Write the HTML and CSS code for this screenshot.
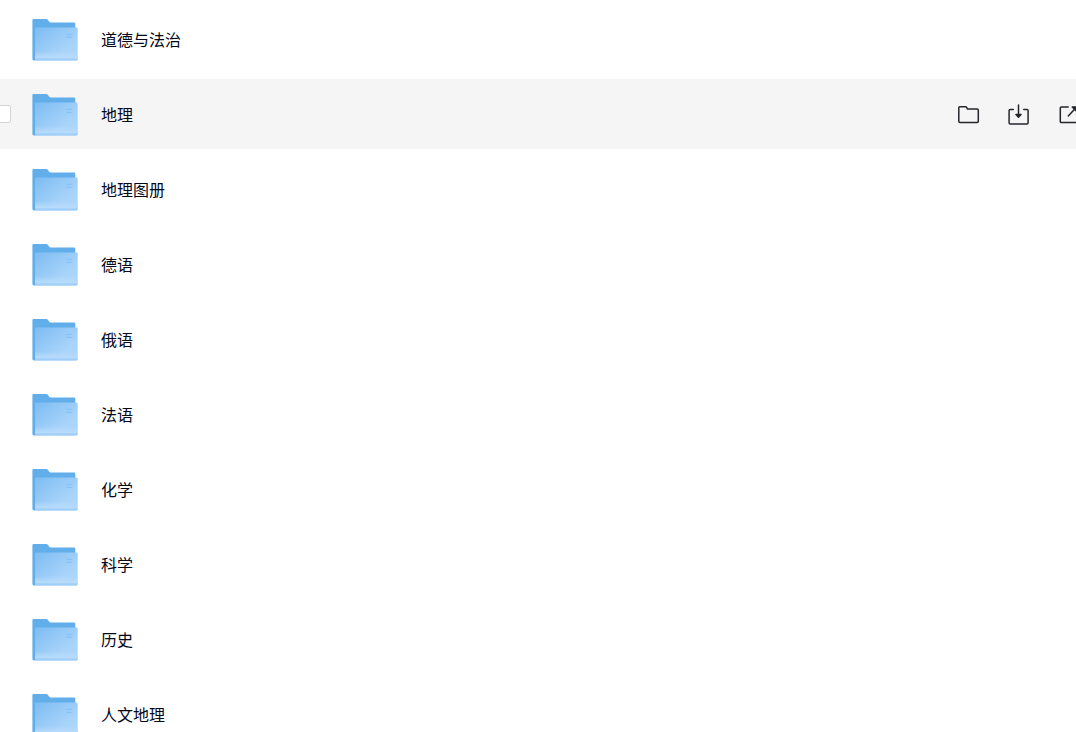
FILE: index.html
```html
<!DOCTYPE html>
<html lang="zh-CN">
<head>
    <meta charset="UTF-8">
    <meta name="viewport" content="width=device-width, initial-scale=1.0">
    <title>文件列表</title>
    <link rel="stylesheet" href="styles.css">
</head>
<body>
    <!-- Shared icons -->
    <svg class="sprite" aria-hidden="true">
        <defs>
            <linearGradient id="front" x1="0" y1="0" x2="1" y2="1">
                <stop offset="0" stop-color="#7dbcf2"/>
                <stop offset="0.7" stop-color="#a9d4fa"/>
                <stop offset="1" stop-color="#aed6fb"/>
            </linearGradient>
            <linearGradient id="shine" x1="0" y1="0" x2="0" y2="1">
                <stop offset="0" stop-color="#b9dcfc" stop-opacity="0"/>
                <stop offset="1" stop-color="#b9dcfc"/>
            </linearGradient>
        </defs>
        <symbol id="icon-folder" viewBox="0 0 46 44">
            <path fill="#62aeeb" d="M1.5 2H14.2Q15.2 2 15.8 2.8L17.2 4.7Q17.7 5.4 18.8 5.4H42Q43.3 5.4 43.3 6.8V40H3V43.4H1.8Q.4 43.4 .4 42V3.2Q.4 2 1.5 2Z"/>
            <path fill="url(#front)" d="M4 10.6H44.4Q45.7 10.6 45.7 11.9V42Q45.7 43.4 44.3 43.4H3V11.6Q3 10.6 4 10.6Z"/>
            <path fill="url(#shine)" d="M3 34H45.7V41.4H3Z"/>
            <path fill="#9fcef8" d="M3 41.4H45.7V42Q45.7 43.4 44.3 43.4H3Z"/>
            <path stroke="#89c2f4" stroke-width="1.2" d="M34 17.3H40.4M34 20.3H40.4"/>
        </symbol>
        <symbol id="icon-open" viewBox="0 0 22 22">
            <path d="M1.8 3.8H8.2L9.6 6H19.2Q20.3 6 20.3 7.1V18.3Q20.3 19.5 19.2 19.5H1.9Q.8 19.5 .8 18.3V4.8Q.8 3.8 1.8 3.8Z"/>
        </symbol>
        <symbol id="icon-download" viewBox="0 0 22 22">
            <path d="M5.3 6.4H2.2Q1.1 6.4 1.1 7.5V19.8Q1.1 21 2.2 21H19Q20.1 21 20.1 19.8V7.5Q20.1 6.4 19 6.4H15.8M10.5 2V13"/>
            <path class="solid" d="M8 11.5H13L10.5 14.2Z"/>
        </symbol>
        <symbol id="icon-share" viewBox="0 0 22 22">
            <path d="M10.2 4H3.4Q2.3 4 2.3 5.1V18.4Q2.3 19.5 3.4 19.5H18.6Q19.7 19.5 19.7 18.4V12M10.3 13L17 5.7"/>
            <path class="solid" d="M14.3 4H19V8.8Z"/>
        </symbol>
    </svg>

    <ul class="file-list">
        <li class="file-row">
            <input type="checkbox" id="file-1">
            <svg class="folder"><use href="#icon-folder"/></svg>
            <label for="file-1">道德与法治</label>
        </li>
        <li class="file-row active">
            <input type="checkbox" id="file-2">
            <svg class="folder"><use href="#icon-folder"/></svg>
            <label for="file-2">地理</label>
            <div class="actions">
                <button type="button" aria-label="打开"><svg><use href="#icon-open"/></svg></button>
                <button type="button" aria-label="下载"><svg><use href="#icon-download"/></svg></button>
                <button type="button" aria-label="分享"><svg><use href="#icon-share"/></svg></button>
            </div>
        </li>
        <li class="file-row">
            <input type="checkbox" id="file-3">
            <svg class="folder"><use href="#icon-folder"/></svg>
            <label for="file-3">地理图册</label>
        </li>
        <li class="file-row">
            <input type="checkbox" id="file-4">
            <svg class="folder"><use href="#icon-folder"/></svg>
            <label for="file-4">德语</label>
        </li>
        <li class="file-row">
            <input type="checkbox" id="file-5">
            <svg class="folder"><use href="#icon-folder"/></svg>
            <label for="file-5">俄语</label>
        </li>
        <li class="file-row">
            <input type="checkbox" id="file-6">
            <svg class="folder"><use href="#icon-folder"/></svg>
            <label for="file-6">法语</label>
        </li>
        <li class="file-row">
            <input type="checkbox" id="file-7">
            <svg class="folder"><use href="#icon-folder"/></svg>
            <label for="file-7">化学</label>
        </li>
        <li class="file-row">
            <input type="checkbox" id="file-8">
            <svg class="folder"><use href="#icon-folder"/></svg>
            <label for="file-8">科学</label>
        </li>
        <li class="file-row">
            <input type="checkbox" id="file-9">
            <svg class="folder"><use href="#icon-folder"/></svg>
            <label for="file-9">历史</label>
        </li>
        <li class="file-row">
            <input type="checkbox" id="file-10">
            <svg class="folder"><use href="#icon-folder"/></svg>
            <label for="file-10">人文地理</label>
        </li>
    </ul>
</body>
</html>
```

FILE: styles.css
```css
body {
    margin: 0;
    height: 100vh;
    overflow: hidden;
    background: #fff;
    color: #03081a;
    font-family: "Noto Sans CJK SC", sans-serif;
    font-size: 16px;
    line-height: 24px;
}

.sprite {
    position: absolute;
    width: 0;
    height: 0;
}

.file-list {
    display: flex;
    flex-direction: column;
    gap: 5px;
    /* rows bleed past both sides of the view */
    margin: 0 -24px;
    padding: 4px 0;
    list-style: none;
}

.file-row {
    display: flex;
    align-items: center;
    box-sizing: border-box;
    min-height: 70px;
    padding: 0 20px 0 17px;
}

.file-row:hover,
.file-row.active {
    background: #f5f5f5;
}

.file-row input {
    appearance: none;
    box-sizing: border-box;
    width: 18px;
    height: 18px;
    margin: 0 21px 0 0;
    border: 1px solid #d4d4d5;
    border-radius: 2px;
    background: #fff;
    visibility: hidden;
}

.file-row:hover input,
.file-row.active input {
    visibility: visible;
}

.file-row input:checked {
    border-color: #637dff;
    background: #637dff;
}

.folder {
    width: 46px;
    height: 44px;
    margin-right: 23px;
}

.file-row label {
    flex: 1;
    cursor: pointer;
}

.actions {
    display: flex;
    gap: 28px;
}

.actions button {
    display: flex;
    padding: 0;
    border: none;
    background: none;
    cursor: pointer;
}

.actions svg {
    width: 22px;
    height: 22px;
    fill: none;
    stroke: #25262b;
    stroke-width: 1.5;
    stroke-linecap: round;
    stroke-linejoin: round;
}

.solid {
    fill: #25262b;
}
```
